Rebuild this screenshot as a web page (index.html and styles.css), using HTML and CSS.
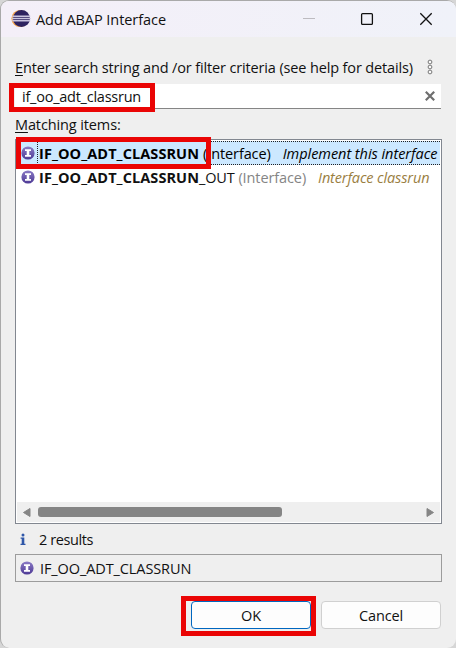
FILE: index.html
```html
<!DOCTYPE html>
<html lang="en">
<head>
<meta charset="utf-8">
<title>Add ABAP Interface</title>
<link rel="stylesheet" href="styles.css">
</head>
<body>
<svg width="0" height="0" class="defs">
  <defs>
    <linearGradient id="purple" x1="0" y1="0" x2="0" y2="1"><stop offset="0" stop-color="#8c7cc6"/><stop offset="1" stop-color="#4d3995"/></linearGradient>
    <symbol id="intf" viewBox="0 0 14 14">
      <circle cx="7" cy="7" r="6.6" fill="url(#purple)"/>
      <path d="M4 3.2h6v1.7H8.3v4.2H10v1.7H4V9.1h1.7V4.9H4z" fill="#fff"/>
    </symbol>
  </defs>
</svg>
<div class="window">
  <header class="titlebar">
    <svg class="logo" width="20" height="20" viewBox="0 0 20 20">
      <circle cx="9" cy="9.5" r="8.6" fill="#f5a347"/>
      <circle cx="10.5" cy="9.5" r="8.5" fill="#2e2360"/>
      <path d="M1.3 6.6h17.9v1.6H1.3zM1 9h18.6v1.3H1zM1.3 11.1h17.9v1.5H1.3z" fill="#c9c4de"/>
    </svg>
    <h1 class="t-title">Add ABAP Interface</h1>
    <svg class="controls" width="126" height="36" viewBox="0 0 126 36" fill="none" stroke="#111" stroke-width="1.3">
      <path d="M0 17.5h12" stroke="#bdbbc0" stroke-width="1"/>
      <rect x="58.6" y="12.6" width="10.8" height="10.8" rx="1"/>
      <path d="M117.3 12.3l11.4 11.4M128.7 12.3l-11.4 11.4"/>
    </svg>
  </header>
  <main>
    <div class="prompt">
      <label class="t-label"><u>E</u>nter search string and /or filter criteria (see help for details)</label>
      <svg width="6" height="16" viewBox="0 0 6 16" fill="#fafafa" stroke="#777" stroke-width="1"><circle cx="3" cy="3" r="1.9"/><circle cx="3" cy="8" r="1.9"/><circle cx="3" cy="13" r="1.9"/></svg>
    </div>
    <div class="search">
      <span class="t-input">if_oo_adt_classrun</span>
      <svg width="10" height="10" viewBox="0 0 10 10" stroke="#6e6e6e" stroke-width="2.2"><path d="M.8 .8l8.4 8.4M9.2 .8L.8 9.2"/></svg>
      <i class="mark mark-search"></i>
    </div>
    <div class="matching"><span class="t-match"><u>M</u>atching items:</span></div>
    <div class="list">
      <div class="row selected">
        <svg class="ic" width="14" height="14"><use href="#intf"/></svg>
        <div class="item"><b class="t-bold">IF_OO_ADT_CLASSRUN</b><span class="t-type">(Interface)</span><em class="t-desc1">Implement this interface</em></div>
        <i class="mark mark-row"></i>
      </div>
      <div class="row">
        <svg class="ic" width="14" height="14"><use href="#intf"/></svg>
        <div class="item"><b class="t-bold">IF_OO_ADT_CLASSRUN</b><span class="t-out">_OUT</span><span class="t-type grey">(Interface)</span><em class="t-desc2">Interface classrun</em></div>
      </div>
      <div class="scroll">
        <svg width="8" height="9" viewBox="0 0 8 9"><path d="M7 .5v8L.5 4.5z" fill="#858585" stroke="#858585" stroke-linejoin="round"/></svg>
        <div class="track"><div class="thumb"></div></div>
        <svg width="8" height="9" viewBox="0 0 8 9"><path d="M1 .5v8l6.5-4z" fill="#858585" stroke="#858585" stroke-linejoin="round"/></svg>
      </div>
    </div>
    <div class="results">
      <svg width="6" height="13" viewBox="0 0 6 13" fill="#2f57a8"><circle cx="3" cy="2" r="1.5"/><path d="M.6 4.5h3.7v6.2h1.2V12H.5v-1.3h1.2V5.8H.6z"/></svg>
      <span class="t-results">2 results</span>
    </div>
    <div class="status"><svg class="ic" width="14" height="14"><use href="#intf"/></svg><span class="t-status">IF_OO_ADT_CLASSRUN</span></div>
    <div class="buttons">
      <div class="btn ok"><span class="t-ok">OK</span><i class="mark mark-ok"></i></div>
      <div class="btn"><span class="t-cancel">Cancel</span></div>
    </div>
  </main>
</div>
</body>
</html>
```

FILE: styles.css
```css
* { box-sizing: border-box; }
body { margin: 0; width: 456px; height: 648px; overflow: hidden; background: #d6d6d6; font-family: "Open Sans", "Noto Sans", sans-serif; font-size: 14.5px; line-height: 20px; color: #111; white-space: nowrap; }
.defs { position: absolute; }
svg { display: block; flex: none; }
u { text-decoration: underline; text-underline-offset: 2px; text-decoration-thickness: 1px; }
.window { width: 456px; height: 648px; background: #efefef; border: 1px solid #a9a9a9; border-right: 0; border-bottom: 0; border-radius: 9px; overflow: hidden; }
.titlebar { height: 36px; display: flex; align-items: center; padding-left: 10px; background: linear-gradient(90deg, #f4eff8, #f0f2f9); }
.titlebar h1 { margin: 0 0 0 5px; padding-top: 2px; font-size: 14.5px; font-weight: 400; flex: 1; letter-spacing: -0.06px; }
.controls { overflow: visible; margin-right: 27px; }
main { padding: 21px 14px 0; }
.prompt { height: 26px; display: flex; align-items: flex-start; }
.prompt label { flex: 1; letter-spacing: -0.14px; }
.prompt svg { margin: 1px 9px 0 0; }
.search { position: relative; width: 426px; height: 25px; display: flex; align-items: center; justify-content: space-between; padding: 0 6px 0 7px; background: #fff; border-bottom: 1px solid #858585; }
.matching { height: 30px; padding-top: 6px; }
.list { width: 427px; height: 385px; border: 1px solid #828790; padding: 1px; background: #fff; display: flex; flex-direction: column; }
.row { position: relative; height: 24px; display: flex; align-items: center; padding-left: 4px; }
.item { flex: 1; display: flex; align-items: center; height: 24px; margin-left: 2px; padding: 2px 0 0 2px; }
.selected { background: #cce8ff; color: #000; }
.selected .item { border: 1px dotted #222; border-right: 0; padding-left: 1px; }
.grey { color: #858585; }
.scroll { margin-top: auto; height: 20px; display: flex; align-items: center; background: #efefef; padding: 0 6px 0 6px; }
.track { flex: 1; padding: 0 7px; }
.thumb { width: 244px; height: 10px; border-radius: 3px; background: #858585; }
.results { height: 30px; display: flex; align-items: center; padding-left: 5px; gap: 13px; }
.status { width: 427px; height: 28px; border: 1px solid #9c9c9c; display: flex; align-items: center; padding-left: 4px; gap: 6px; }
.buttons { display: flex; justify-content: flex-end; gap: 10px; margin: 19px 1px 0 0; }
.btn { position: relative; width: 120px; height: 28px; display: flex; align-items: center; justify-content: center; background: #fdfdfd; border: 1px solid #d0d0d0; border-radius: 4px; }
.ok { border-color: #0067c0; }
.mark { position: absolute; border: 5px solid #ea0505; }
.mark-search { left: -6px; top: -1px; width: 146px; height: 29px; }
.mark-row { left: -1px; top: -4px; width: 195px; height: 32px; }
.mark-ok { left: -11px; top: -6px; width: 135px; height: 40px; }
.t-input { letter-spacing: -0.24px; padding-top: 2px; }
.t-match { letter-spacing: -0.12px; }
.t-bold { letter-spacing: 0.08px; }
.t-out { letter-spacing: -0.2px; }
.t-type { margin-left: 4px; letter-spacing: -0.1px; }
.t-desc1, .t-desc2 { margin-left: 12px; }
.t-desc1 { letter-spacing: -0.04px; }
.t-desc2 { color: #9a7e3f; letter-spacing: -0.13px; }
.t-results { letter-spacing: -0.4px; padding-top: 1px; }
.t-status { letter-spacing: -0.1px; padding-top: 1px; }
.t-ok, .t-cancel { padding-top: 2px; }
.t-cancel { letter-spacing: -0.15px; }
```
